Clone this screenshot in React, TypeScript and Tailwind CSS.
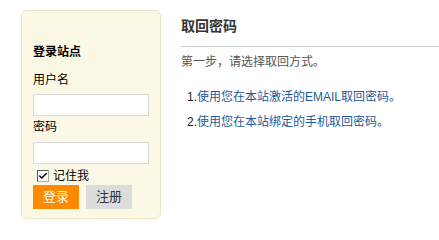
import { Check } from "lucide-react";

const FONT = "font-['Liberation_Sans','Noto_Sans_CJK_SC',sans-serif]";

function LoginBox() {
  return (
    <div className="mt-[10px] ml-[21px] w-[140px] h-[209px] shrink-0 rounded-[6px] border border-[#ece4c4] bg-[#fbf8e6] px-[11px] pt-[32px]">
      <h3 className="text-[12px] leading-[18px] font-bold text-black">登录站点</h3>
      <div className="mt-[10px] text-[12px] leading-[18px] text-black">用户名</div>
      <input type="text" className="mt-[5px] block w-[116px] h-[22px] border border-[#d9d9d9] bg-white outline-none" />
      <div className="mt-[2px] text-[12px] leading-[18px] text-black">密码</div>
      <input type="password" className="mt-[6px] block w-[116px] h-[22px] border border-[#d9d9d9] bg-white outline-none" />
      <label className="mt-[3px] flex items-center h-[18px] pl-[4px] gap-[4px] text-[12px] text-black">
        <span className="flex items-center justify-center w-[12px] h-[12px] border border-t-[#555] border-l-[#555] border-r-[#aaa] border-b-[#aaa] bg-white">
          <Check className="w-[10px] h-[10px] text-black" strokeWidth={3.5} />
        </span>
        记住我
      </label>
      <div className="flex gap-[7px]">
        <button className="w-[46px] h-[24px] bg-[#ff8a00] text-white text-[13px] leading-[24px]">登录</button>
        <button className="w-[46px] h-[24px] bg-[#dcdcdc] text-[#333] text-[13px] leading-[24px]">注册</button>
      </div>
    </div>
  );
}

export default function App() {
  const ways = [
    "使用您在本站激活的EMAIL取回密码。",
    "使用您在本站绑定的手机取回密码。",
  ];

  return (
    <div className={`flex w-[439px] h-[226px] bg-white ${FONT}`}>
      <LoginBox />

      {/* Right column */}
      <div className="flex-1 ml-[20px] pt-[16px]">
        <h2 className="text-[14px] leading-[20px] font-bold text-[#333] pb-[10px] border-b border-[#cccccc]">取回密码</h2>
        <p className="mt-[6px] text-[12px] leading-[18px] text-[#555]">第一步，请选择取回方式。</p>
        <ol className="mt-[14px] pl-[6px]">
          {ways.map((w, i) => (
            <li key={i} className="text-[12px] leading-[25px] text-[#222]">
              {i + 1}.<a href="#" className="text-[#1c5a9c]">{w}</a>
            </li>
          ))}
        </ol>
      </div>
    </div>
  );
}
